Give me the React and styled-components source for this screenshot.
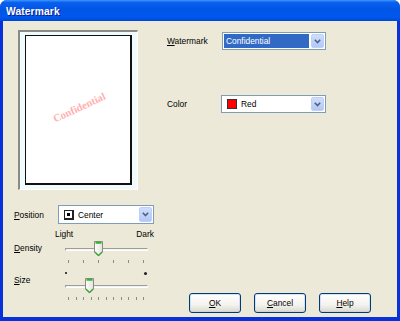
import styled, { createGlobalStyle } from "styled-components";

const GlobalStyle = createGlobalStyle`
  html, body {
    margin: 0;
    padding: 0;
    background: #ffffff;
  }
  body {
    font-family: "Liberation Sans", Arial, sans-serif;
    font-size: 8.4px;
    color: #000;
  }
`;

const Window = styled.div`
  width: 400px;
  height: 321px;
  display: flex;
  flex-direction: column;
  border-radius: 7px 7px 0 0;
  overflow: hidden;
  background: #0831d9;
  box-sizing: border-box;
`;

const TitleBar = styled.div`
  height: 21px;
  flex: none;
  display: flex;
  align-items: center;
  padding: 1px 0 0 6px;
  box-sizing: border-box;
  background: linear-gradient(
    to bottom,
    #3d95ff 0%,
    #0a60ee 12%,
    #0055e5 45%,
    #0058ee 80%,
    #0048d8 100%
  );
  color: #fff;
  font-weight: bold;
  font-size: 10.3px;
  text-shadow: 1px 1px 0 #0a1d8c;
  letter-spacing: 0.1px;
`;

const Body = styled.div`
  flex: 1;
  margin: 0 3px 4px 3px;
  background: #ece9d8;
  display: flex;
`;

const LeftColumn = styled.div`
  width: 140px;
  padding: 9px 0 0 11px;
  display: flex;
  flex-direction: column;
`;

const RightColumn = styled.div`
  flex: 1;
  margin-left: 13px;
  padding-top: 11px;
  display: flex;
  flex-direction: column;
`;

const PreviewFrame = styled.div`
  width: 120px;
  height: 160px;
  margin-left: 4px;
  box-sizing: border-box;
  border-top: 2px solid #8a8a86;
  border-left: 2px solid #8a8a86;
  border-right: 1px solid #ffffff;
  border-bottom: 1px solid #ffffff;
  background: #f1fbfb;
  padding: 3px 0 0 5px;
`;

const Page = styled.div`
  width: 107px;
  height: 150px;
  box-sizing: border-box;
  border: 1px solid #111;
  border-right-width: 2px;
  border-bottom-width: 2px;
  background: #fff;
  display: flex;
  align-items: center;
  justify-content: center;
  padding-bottom: 4px;
`;

const WatermarkText = styled.span`
  font-family: "Liberation Serif", "Times New Roman", serif;
  font-weight: bold;
  font-size: 10.6px;
  color: #ffb0b0;
  transform: rotate(-25deg);
  margin-left: 2px;
`;

const FieldRow = styled.div`
  display: flex;
  align-items: center;
  margin-top: ${(p) => p.$top || 0}px;
`;

const Label = styled.span`
  width: ${(p) => p.$width}px;
  flex: none;
  white-space: nowrap;
`;

const Key = styled.span`
  text-decoration: underline;
`;

const Combo = styled.div`
  width: ${(p) => p.$width}px;
  height: ${(p) => p.$height || 18}px;
  box-sizing: border-box;
  border: 1px solid #7f9db9;
  background: #fff;
  display: flex;
  align-items: center;
  padding: 1px;
`;

const ComboValue = styled.div`
  flex: 1;
  height: 100%;
  display: flex;
  align-items: center;
  gap: 4px;
  padding-left: ${(p) => p.$pad || 2}px;
  background: ${(p) => (p.$selected ? "#316ac5" : "transparent")};
  color: ${(p) => (p.$selected ? "#fff" : "#000")};
  margin-right: 2px;
`;

const ArrowButton = styled.div`
  width: 13px;
  height: 100%;
  box-sizing: border-box;
  border: 1px solid #bcd0f8;
  border-radius: 2px;
  background: linear-gradient(to bottom, #d0ddfc, #b3c7f6);
  display: flex;
  align-items: center;
  justify-content: center;
`;

const Swatch = styled.span`
  width: 10px;
  height: 10px;
  box-sizing: border-box;
  border: 1px solid #333;
  background: ${(p) => p.$color};
  flex: none;
`;

const PositionIcon = styled.span`
  width: 10px;
  height: 10px;
  box-sizing: border-box;
  border: 1px solid #222;
  border-right-width: 2px;
  border-bottom-width: 2px;
  display: flex;
  align-items: center;
  justify-content: center;
  flex: none;
  &::after {
    content: "";
    width: 3px;
    height: 3px;
    background: #000;
  }
`;

const ScaleLabels = styled.div`
  display: flex;
  justify-content: space-between;
  margin: 5px 0 0 41px;
  line-height: 10px;
`;

const SliderRow = styled.div`
  display: flex;
  align-items: flex-start;
  margin-top: ${(p) => p.$top || 0}px;
`;

const SliderLabel = styled.span`
  width: 50px;
  flex: none;
  line-height: 10px;
  margin-top: ${(p) => p.$offset}px;
`;

const SliderBox = styled.div`
  width: 84px;
  display: flex;
  flex-direction: column;
`;

const EndMarks = styled.div`
  height: 4px;
  display: flex;
  justify-content: space-between;
  align-items: center;
  padding: 0 1px 0 1px;
  margin-bottom: 4px;
`;

const Dot = styled.span`
  width: ${(p) => p.$size}px;
  height: ${(p) => p.$size}px;
  background: #222;
  border-radius: 50%;
`;

const TrackArea = styled.div`
  height: 14px;
  position: relative;
  display: flex;
  align-items: center;
`;

const Track = styled.div`
  flex: 1;
  height: 3px;
  margin-left: 1px;
  box-sizing: border-box;
  border-top: 1px solid #9d9c99;
  border-left: 1px solid #9d9c99;
  border-bottom: 1px solid #ffffff;
  border-right: 1px solid #ffffff;
  background: #f3f3ef;
  border-radius: 1px;
`;

const Thumb = styled.svg`
  position: absolute;
  top: -1px;
  left: ${(p) => p.$left}px;
`;

const Ticks = styled.div`
  display: flex;
  justify-content: space-between;
  padding: 0 4px;
  margin-top: 4px;
`;

const Tick = styled.span`
  width: 1px;
  height: 3px;
  background: #8a8a86;
`;

const Buttons = styled.div`
  display: flex;
  gap: 13px;
  margin: auto 0 4px 22px;
`;

const Button = styled.button`
  width: 52px;
  height: 20px;
  box-sizing: border-box;
  border: 1px solid #003c74;
  border-radius: 3px;
  background: linear-gradient(to bottom, #ffffff 0%, #f4f3ee 60%, #dcd8cc 100%);
  box-shadow: inset 0 0 0 1px rgba(190, 210, 240, 0.6);
  font-family: "Liberation Sans", Arial, sans-serif;
  font-size: 8.4px;
  color: #000;
  padding: 0;
  display: flex;
  align-items: center;
  justify-content: center;
`;

const Chevron = () => (
  <svg width="7" height="5" viewBox="0 0 7 5">
    <path d="M0.8 0.8 L3.5 3.5 L6.2 0.8" fill="none" stroke="#4d6185" strokeWidth="1.6" />
  </svg>
);

const ThumbIcon = ({ left }) => (
  <Thumb $left={left} width="9" height="16" viewBox="0 0 9 16">
    <defs>
      <linearGradient id="thumbFill" x1="0" y1="0" x2="1" y2="0">
        <stop offset="0" stopColor="#ffffff" />
        <stop offset="1" stopColor="#e3e2da" />
      </linearGradient>
    </defs>
    <path d="M0.5 0.5 H8.5 V11 L4.5 15 L0.5 11 Z" fill="url(#thumbFill)" stroke="#8b8b85" />
    <path d="M1.5 1.8 H7.5" stroke="#2fb52f" strokeWidth="2" />
    <path d="M1 11 L4.5 14.5 L8 11" fill="none" stroke="#32a632" strokeWidth="1.2" />
  </Thumb>
);

const Slider = ({ value, ticks }) => (
  <>
    <TrackArea>
      <Track />
      <ThumbIcon left={value} />
    </TrackArea>
    <Ticks>
      {Array.from({ length: ticks }).map((_, i) => (
        <Tick key={i} />
      ))}
    </Ticks>
  </>
);

export default function App() {
  return (
    <>
      <GlobalStyle />
      <Window>
        <TitleBar>Watermark</TitleBar>
        <Body>
          <LeftColumn>
            <PreviewFrame>
              <Page>
                <WatermarkText>Confidential</WatermarkText>
              </Page>
            </PreviewFrame>

            <FieldRow $top={15}>
              <Label $width={44}>
                <Key>P</Key>osition
              </Label>
              <Combo $width={96} $height={19}>
                <ComboValue $pad={4}>
                  <PositionIcon />
                  Center
                </ComboValue>
                <ArrowButton>
                  <Chevron />
                </ArrowButton>
              </Combo>
            </FieldRow>

            <ScaleLabels>
              <span>Light</span>
              <span>Dark</span>
            </ScaleLabels>

            <SliderRow $top={3}>
              <SliderLabel $offset={1}>
                <Key>D</Key>ensity
              </SliderLabel>
              <SliderBox>
                <Slider value={30} ticks={6} />
              </SliderBox>
            </SliderRow>

            <SliderRow $top={8}>
              <SliderLabel $offset={4}>
                <Key>S</Key>ize
              </SliderLabel>
              <SliderBox>
                <EndMarks>
                  <Dot $size={1.5} />
                  <Dot $size={3} />
                </EndMarks>
                <Slider value={21} ticks={11} />
              </SliderBox>
            </SliderRow>
          </LeftColumn>

          <RightColumn>
            <FieldRow>
              <Label $width={55}>
                <Key>W</Key>atermark
              </Label>
              <Combo $width={104}>
                <ComboValue $selected>Confidential</ComboValue>
                <ArrowButton>
                  <Chevron />
                </ArrowButton>
              </Combo>
            </FieldRow>

            <FieldRow $top={45}>
              <Label $width={54}>Color</Label>
              <Combo $width={105}>
                <ComboValue $pad={4}>
                  <Swatch $color="#ff0000" />
                  Red
                </ComboValue>
                <ArrowButton>
                  <Chevron />
                </ArrowButton>
              </Combo>
            </FieldRow>

            <Buttons>
              <Button>
                <Key>O</Key>K
              </Button>
              <Button>
                <Key>C</Key>ancel
              </Button>
              <Button>
                <Key>H</Key>elp
              </Button>
            </Buttons>
          </RightColumn>
        </Body>
      </Window>
    </>
  );
}
